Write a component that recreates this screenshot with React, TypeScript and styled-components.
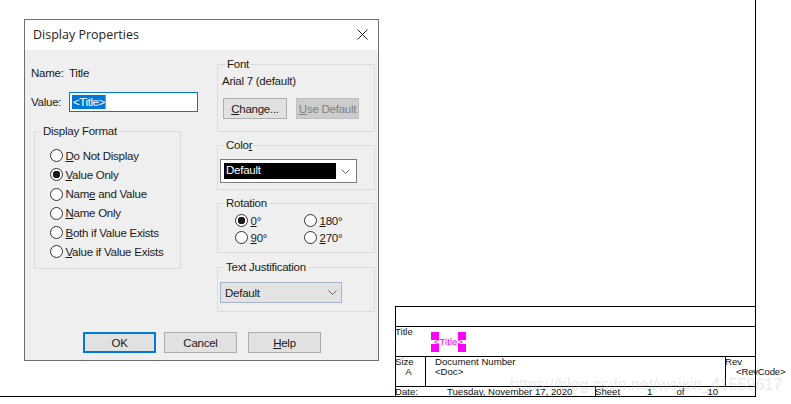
import * as React from "react";
import styled, { createGlobalStyle } from "styled-components";

const FORMATS = [
  { before: "", key: "D", after: "o Not Display" },
  { before: "", key: "V", after: "alue Only", checked: true },
  { before: "Nam", key: "e", after: " and Value" },
  { before: "", key: "N", after: "ame Only" },
  { before: "", key: "B", after: "oth if Value Exists" },
  { before: "", key: "V", after: "alue if Value Exists" },
];

const Chevron = () => (
  <svg width="9" height="5" viewBox="0 0 9 5" fill="none">
    <path d="M0.5 0.5 L4.5 4.5 L8.5 0.5" stroke="#666" strokeWidth="1" />
  </svg>
);

const App: React.FC = () => {
  return (
    <>
      <GlobalStyle />
      <Page>
        <Dialog>
          <TitleBar>
            <TitleText>Display Properties</TitleText>
            <svg width="11" height="11" viewBox="0 0 11 11" fill="none">
              <path d="M0.5 0.5 L10.5 10.5 M10.5 0.5 L0.5 10.5" stroke="#222" strokeWidth="1" />
            </svg>
          </TitleBar>
          <Body>
            <Columns>
              <LeftColumn>
                <NameRow>
                  <FieldLabel>Name:</FieldLabel>
                  <span>Title</span>
                </NameRow>
                <ValueRow>
                  <FieldLabel>Value:</FieldLabel>
                  <ValueInput>
                    <Selected>&lt;Title&gt;</Selected>
                  </ValueInput>
                </ValueRow>
                <FormatGroup>
                  <GroupLabel>Display Format</GroupLabel>
                  <FormatList>
                    {FORMATS.map((f, i) => (
                      <RadioRow key={i}>
                        <Radio $checked={f.checked} />
                        <span>
                          {f.before}
                          <u>{f.key}</u>
                          {f.after}
                        </span>
                      </RadioRow>
                    ))}
                  </FormatList>
                </FormatGroup>
              </LeftColumn>

              <RightColumn>
                <FontGroup>
                  <GroupLabel>Font</GroupLabel>
                  <FontName>Arial 7 (default)</FontName>
                  <FontButtons>
                    <SmallButton>
                      <u>C</u>hange...
                    </SmallButton>
                    <SmallButton disabled>
                      <u>U</u>se Default
                    </SmallButton>
                  </FontButtons>
                </FontGroup>
                <ColorGroup>
                  <GroupLabel>
                    Colo<u>r</u>
                  </GroupLabel>
                  <ColorCombo>
                    <ColorValue>Default</ColorValue>
                    <Chevron />
                  </ColorCombo>
                </ColorGroup>
                <RotationGroup>
                  <GroupLabel>Rotation</GroupLabel>
                  <RotationGrid>
                    <RadioRow>
                      <Radio $checked />
                      <span>
                        <u>0</u>°
                      </span>
                    </RadioRow>
                    <RadioRow>
                      <Radio />
                      <span>
                        <u>1</u>80°
                      </span>
                    </RadioRow>
                    <RadioRow>
                      <Radio />
                      <span>
                        <u>9</u>0°
                      </span>
                    </RadioRow>
                    <RadioRow>
                      <Radio />
                      <span>
                        <u>2</u>70°
                      </span>
                    </RadioRow>
                  </RotationGrid>
                </RotationGroup>
                <JustifyGroup>
                  <GroupLabel>Text Justification</GroupLabel>
                  <JustifyCombo>
                    <span>Default</span>
                    <Chevron />
                  </JustifyCombo>
                </JustifyGroup>
              </RightColumn>
            </Columns>
            <Footer>
              <FooterButton $primary>OK</FooterButton>
              <FooterButton>Cancel</FooterButton>
              <FooterButton>
                <u>H</u>elp
              </FooterButton>
            </Footer>
          </Body>
        </Dialog>

        <Sheet>
          <TitleBlock>
            <EmptyRow />
            <TitleRow>
              <BlockLabel>Title</BlockLabel>
              <Selection>
                <Handle $x="left" $y="top" />
                <Handle $x="right" $y="top" />
                <Handle $x="left" $y="bottom" />
                <Handle $x="right" $y="bottom" />
                <SelectionText>&lt;Title&gt;</SelectionText>
              </Selection>
            </TitleRow>
            <DocRow>
              <SizeCell>
                <BlockLabel>Size</BlockLabel>
                <SizeValue>A</SizeValue>
              </SizeCell>
              <DocCell>
                <span>Document Number</span>
                <span>&lt;Doc&gt;</span>
              </DocCell>
              <RevCell>
                <BlockLabel>Rev</BlockLabel>
                <RevValue>&lt;RevCode&gt;</RevValue>
              </RevCell>
            </DocRow>
            <DateRow>
              <DateLabel>Date:</DateLabel>
              <DateValue>Tuesday, November 17, 2020</DateValue>
              <SheetCell>
                <SheetLabel>Sheet</SheetLabel>
                <SheetNumber>1</SheetNumber>
                <SheetOf>of</SheetOf>
                <SheetTotal>10</SheetTotal>
              </SheetCell>
            </DateRow>
          </TitleBlock>
        </Sheet>
        <Watermark>https://blog.csdn.net/weixin_41559617</Watermark>
      </Page>
    </>
  );
};

export default App;

const GlobalStyle = createGlobalStyle`
  html, body {
    margin: 0;
    padding: 0;
    background: #fff;
    overflow: hidden;
  }
  * {
    box-sizing: border-box;
  }
`;

const Page = styled.div`
  width: 756px;
  height: 397px;
  display: flex;
  align-items: flex-start;
  border-right: 1px solid #000;
  border-bottom: 1px solid #000;
  font-family: "Liberation Sans", Arial, sans-serif;
  font-size: 11.5px;
  letter-spacing: -0.25px;
  color: #1a1a1a;
  position: relative;
`;

const Dialog = styled.div`
  width: 355px;
  height: 342px;
  margin: 19px 0 0 24px;
  flex: none;
  display: flex;
  flex-direction: column;
  border: 1px solid #6f6f6f;
  background: #efefef;
`;

const TitleBar = styled.div`
  height: 30px;
  flex: none;
  background: #fff;
  display: flex;
  align-items: center;
  justify-content: space-between;
  padding: 0 10px 2px 8px;
`;

const TitleText = styled.span`
  font-family: "Open Sans", sans-serif;
  font-size: 12.5px;
  letter-spacing: 0;
  color: #222;
`;

const Body = styled.div`
  flex: 1;
  display: flex;
  flex-direction: column;
`;

const Columns = styled.div`
  flex: 1;
  display: flex;
  padding-left: 9px;
`;

const LeftColumn = styled.div`
  width: 183px;
  flex: none;
  display: flex;
  flex-direction: column;
`;

const FieldLabel = styled.span`
  width: 38px;
  flex: none;
`;

const NameRow = styled.div`
  display: flex;
  height: 14px;
  line-height: 14px;
  margin-top: 16px;
  margin-left: -3px;
`;

const ValueRow = styled.div`
  display: flex;
  align-items: center;
  margin-top: 12px;
  margin-left: -3px;
`;

const ValueInput = styled.div`
  width: 129px;
  height: 20px;
  border: 1px solid #0078d7;
  background: #fff;
  display: flex;
  align-items: center;
  padding-left: 2px;
`;

const Selected = styled.span`
  background: #0078d7;
  color: #fff;
  line-height: 14px;
  padding: 0 0 0 1px;
  letter-spacing: -0.4px;
  border-right: 1px solid #e8842c;
`;

const Group = styled.fieldset`
  margin: 0;
  padding: 0 2px;
  border: 1px solid #dcdcdc;
  min-width: 0;
`;

const GroupLabel = styled.legend`
  margin-left: 4px;
  padding: 0 2px;
  font-size: 11.5px;
  line-height: 14px;
  color: #1a1a1a;
`;

const FormatGroup = styled(Group)`
  width: 147px;
  height: 145px;
  margin-top: 12px;
`;

const FormatList = styled.div`
  display: flex;
  flex-direction: column;
  padding: 11px 0 0 13px;
  gap: 5.7px;
`;

const RadioRow = styled.div`
  display: flex;
  align-items: center;
  gap: 2.5px;
  height: 13.5px;
  line-height: 14px;
  white-space: nowrap;
`;

const Radio = styled.span<{ $checked?: boolean }>`
  width: 13px;
  height: 13px;
  flex: none;
  border-radius: 50%;
  border: 1px solid #333;
  background: ${(p) =>
    p.$checked ? "radial-gradient(circle, #1a1a1a 0 3.5px, #fff 4px)" : "#fff"};
`;

const RightColumn = styled.div`
  width: 158px;
  flex: none;
  display: flex;
  flex-direction: column;
  gap: 6px;
  margin-top: 7px;
`;

const FontGroup = styled(Group)`
  height: 75px;
  padding: 0 3px;
`;

const FontName = styled.div`
  line-height: 14px;
  margin-top: 3px;
  padding-left: 1px;
`;

const FontButtons = styled.div`
  display: flex;
  gap: 9px;
  margin-top: 10px;
  padding-left: 2px;
`;

const SmallButton = styled.button`
  width: 64px;
  height: 21px;
  padding: 0;
  font: inherit;
  letter-spacing: inherit;
  color: #1a1a1a;
  background: #e1e1e1;
  border: 1px solid #adadad;
  white-space: nowrap;

  &:disabled {
    width: 63px;
    color: #838383;
    background: #cccccc;
    border-color: #bfbfbf;
  }
`;

const ColorGroup = styled(Group)`
  height: 52px;
`;

const ColorCombo = styled.div`
  width: 137px;
  height: 24px;
  margin-top: 7px;
  border: 1px solid #7a7a7a;
  background: #fff;
  display: flex;
  align-items: center;
  justify-content: space-between;
  padding: 0 6px 0 3px;
`;

const ColorValue = styled.span`
  width: 112px;
  height: 16px;
  line-height: 15px;
  background: #000;
  color: #fff;
  padding-left: 2px;
`;

const RotationGroup = styled(Group)`
  height: 57px;
`;

const RotationGrid = styled.div`
  display: grid;
  grid-template-columns: 69px 68px;
  row-gap: 3.5px;
  padding: 4px 0 0 15px;
`;

const JustifyGroup = styled(Group)`
  height: 52px;
  margin-top: 1px;
`;

const JustifyCombo = styled.div`
  width: 122px;
  height: 21px;
  margin-top: 8px;
  border: 1px solid #a3b5c6;
  background: #e3e3e3;
  display: flex;
  align-items: center;
  justify-content: space-between;
  padding: 0 4px 0 4px;
`;

const Footer = styled.div`
  flex: none;
  display: flex;
  gap: 8px;
  padding: 0 0 7px 58px;
`;

const FooterButton = styled.button<{ $primary?: boolean }>`
  width: 73px;
  height: 21px;
  padding: 0;
  font: inherit;
  letter-spacing: inherit;
  color: #1a1a1a;
  background: #e1e1e1;
  border: ${(p) => (p.$primary ? "2px solid #0078d7" : "1px solid #adadad")};

  &:last-child {
    margin-left: 3px;
  }
`;

const Sheet = styled.div`
  flex: 1;
  align-self: stretch;
  display: flex;
  flex-direction: column;
  justify-content: flex-end;
  font-size: 9.6px;
  letter-spacing: 0;
  line-height: 10px;
  color: #111;
`;

const TitleBlock = styled.div`
  margin-left: 16px;
  display: flex;
  flex-direction: column;
  border-left: 1px solid #000;
  border-top: 1px solid #000;
`;

const EmptyRow = styled.div`
  height: 20px;
  border-bottom: 1px solid #000;
`;

const TitleRow = styled.div`
  height: 30px;
  border-bottom: 1px solid #000;
  display: flex;
  position: relative;
`;

const BlockLabel = styled.span`
  display: block;
  margin-left: -1px;
`;

const Selection = styled.div`
  position: absolute;
  left: 35px;
  top: 5px;
  width: 35px;
  height: 20px;
  display: flex;
  align-items: center;
  justify-content: center;
`;

const Handle = styled.span<{ $x: "left" | "right"; $y: "top" | "bottom" }>`
  position: absolute;
  width: 8px;
  height: 8px;
  background: #ff00ff;
  ${(p) => p.$x}: 0;
  ${(p) => p.$y}: 0;
`;

const SelectionText = styled.span`
  position: relative;
  color: #ff00ff;
`;

const DocRow = styled.div`
  height: 30px;
  border-bottom: 1px solid #000;
  display: flex;
`;

const SizeCell = styled.div`
  width: 30px;
  flex: none;
  border-right: 1px solid #000;
`;

const SizeValue = styled.div`
  text-align: center;
  padding-right: 4px;
`;

const DocCell = styled.div`
  flex: 1;
  display: flex;
  flex-direction: column;
  padding-left: 9px;
`;

const RevCell = styled.div`
  width: 30px;
  flex: none;
  border-left: 1px solid #000;
  white-space: nowrap;
`;

const RevValue = styled.div`
  padding-left: 10px;
  letter-spacing: -0.2px;
`;

const DateRow = styled.div`
  height: 9px;
  display: flex;
  line-height: 10px;
`;

const DateLabel = styled.span`
  width: 52px;
  margin-left: -1px;
  flex: none;
`;

const DateValue = styled.span`
  width: 148px;
  flex: none;
  white-space: nowrap;
`;

const SheetCell = styled.div`
  display: flex;
  border-left: 1px solid #000;
  flex: 1;
`;

const SheetLabel = styled.span`
  margin-left: -1px;
`;

const SheetNumber = styled.span`
  margin-left: 27px;
`;

const SheetOf = styled.span`
  margin-left: 24px;
`;

const SheetTotal = styled.span`
  margin-left: 23px;
`;

const Watermark = styled.div`
  position: absolute;
  left: 510px;
  top: 376px;
  font-size: 16px;
  line-height: 18px;
  letter-spacing: 0;
  white-space: nowrap;
  color: rgba(190, 190, 190, 0.35);
`;
